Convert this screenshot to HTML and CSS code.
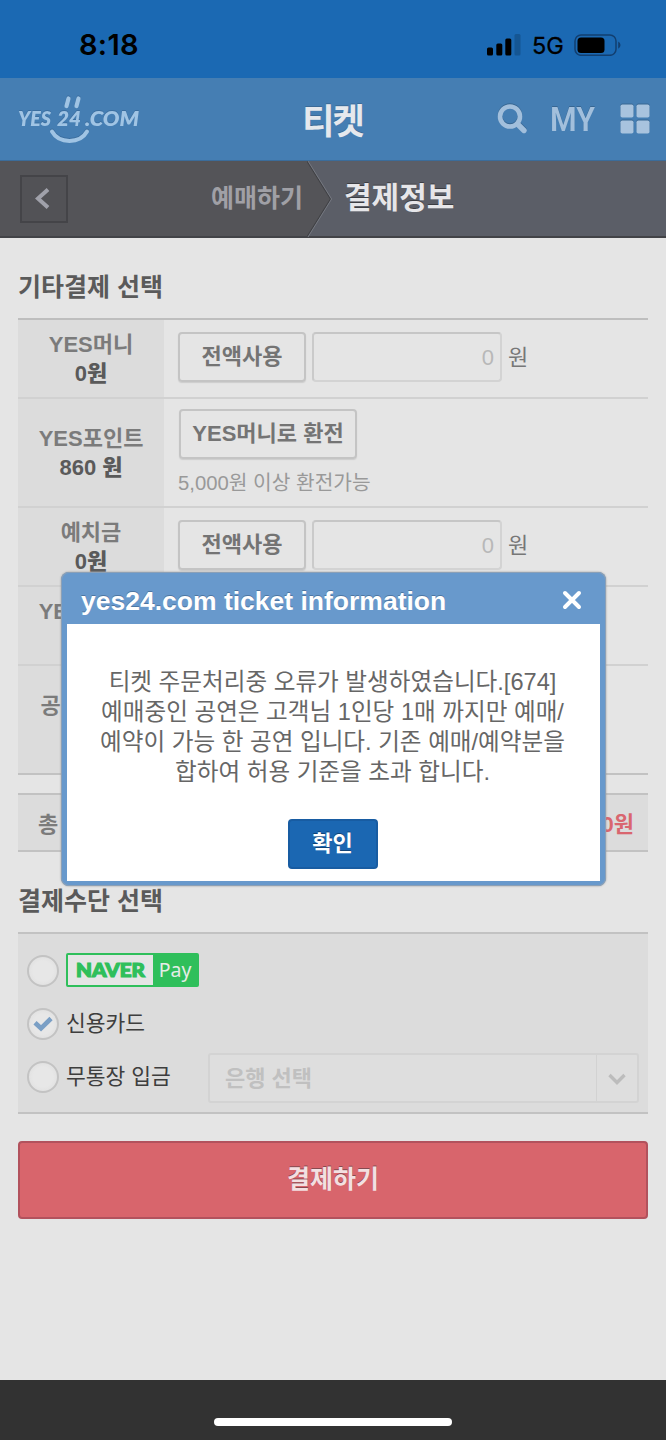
FILE: index.html
```html
<!DOCTYPE html>
<html lang="ko">
<head>
<meta charset="utf-8">
<title>결제정보</title>
<link rel="stylesheet" href="styles.css">
</head>
<body>
<div class="screen">
  <div class="status">
    <span class="time">8:18</span>
    <div class="status-icons">
      <svg class="signal" width="34" height="22" viewBox="0 0 34 22">
        <rect x="0" y="13.5" width="6" height="8" rx="1.5"/>
        <rect x="9.3" y="9.5" width="6" height="12" rx="1.5"/>
        <rect x="18.3" y="4.5" width="6" height="17" rx="1.5"/>
        <rect x="27.5" y="0" width="6" height="21.5" rx="1.5" fill="#155693"/>
      </svg>
      <span class="network">5G</span>
      <svg width="47" height="22" viewBox="0 0 47 22">
        <rect x="1" y=".9" width="41" height="20.4" rx="6" fill="none" stroke="#123f70" stroke-width="1.5"/>
        <rect x="3.5" y="3.4" width="27" height="15.6" rx="3.5"/>
        <path d="M44.2 7.5q2.3 1 2.3 3.6t-2.3 3.6z" fill="#123f70"/>
      </svg>
    </div>
  </div>

  <header class="nav">
    <svg class="logo" width="126" height="52" viewBox="0 0 126 52">
      <g class="logo-text">
        <text x="0" y="33" textLength="33" lengthAdjust="spacingAndGlyphs">YES</text>
        <text x="39" y="33" textLength="24" lengthAdjust="spacingAndGlyphs">24</text>
        <text x="67" y="33" textLength="54" lengthAdjust="spacingAndGlyphs">.COM</text>
      </g>
      <path d="M50.500 5.500l-2 7.500M60.500 5.500l-2 7.500" stroke-width="4.200"/>
      <path d="M34 38.500c7 12.500 28 12.500 35 0" stroke-width="4"/>
    </svg>
    <h1 class="nav-title">티켓</h1>
    <div class="nav-tools">
      <svg width="31" height="32" viewBox="0 0 31 32">
        <circle cx="13" cy="13.500" r="10" fill="none" stroke-width="4.6"/>
        <path d="M20.500 21l6.500 6.500" stroke-width="5.400"/>
      </svg>
      <svg class="my" width="46" height="32" viewBox="0 0 46 32"><text x="-1" y="27.500" textLength="45" lengthAdjust="spacingAndGlyphs">MY</text></svg>
      <svg class="grid" width="30" height="32" viewBox="0 0 30 32">
        <rect x=".5" y="1.500" width="13" height="13" rx="1.800"/><rect x="16.500" y="1.500" width="13" height="13" rx="1.800"/>
        <rect x=".5" y="17.500" width="13" height="13" rx="1.800"/><rect x="16.500" y="17.500" width="13" height="13" rx="1.800"/>
      </svg>
    </div>
  </header>

  <div class="steps">
    <div class="step-prev">
      <div class="back"><svg width="20" height="26" viewBox="0 0 20 26"><path d="M15 3.500L5 12.500l10 9" fill="none" stroke="#a0a1aa" stroke-width="4"/></svg></div>
      <span>예매하기</span>
    </div>
    <svg class="arrow" width="26" height="76" viewBox="0 0 26 76">
      <path d="M0 0L24 38 0 76z" fill="#545458"/>
      <path d="M0 0L23.500 38 0 76" fill="none" stroke="#414246" stroke-width="1.200"/>
      <path d="M1 0L24.600 38 1 76" fill="none" stroke="#767981" stroke-width="1"/>
    </svg>
    <span class="step-now">결제정보</span>
  </div>

  <main class="content">
    <h2 class="heading first">기타결제 선택</h2>
    <div class="table">
      <div class="row"><div class="label">YES머니<b>0원</b></div>
        <div class="cell"><span class="btn">전액사용</span><span class="field">0</span><span class="unit">원</span></div></div>
      <div class="row tall"><div class="label">YES포인트<b>860 원</b></div>
        <div class="cell stack"><span class="btn wide">YES머니로 환전</span><span class="hint">5,000원 이상 환전가능</span></div></div>
      <div class="row"><div class="label">예치금<b>0원</b></div>
        <div class="cell"><span class="btn">전액사용</span><span class="field">0</span><span class="unit">원</span></div></div>
      <div class="row"><div class="label">YES상품권<b>0원</b></div><div class="cell"></div></div>
      <div class="row tall last"><div class="label">공연예매권<b>0원</b></div><div class="cell"></div></div>
    </div>
    <div class="total"><span>총 결제금액</span><span class="amount">0원</span></div>

    <h2 class="heading second">결제수단 선택</h2>
    <div class="methods">
      <div class="method"><i class="radio"></i>
        <span class="naver"><svg width="85" height="30" viewBox="0 0 85 30"><text class="naver-word" x="8" y="21.500" textLength="69" lengthAdjust="spacingAndGlyphs">NAVER</text></svg><span class="pay">Pay</span></span></div>
      <div class="method"><i class="radio"><svg width="20" height="16" viewBox="0 0 20 16"><path d="M2 6.800L8 12.300 18 2.500" fill="none" stroke="#7a9fc5" stroke-width="4.600"/></svg></i><span class="method-name">신용카드</span></div>
      <div class="method"><i class="radio"></i><span class="method-name">무통장 입금</span>
        <div class="select"><span>은행 선택</span><span class="drop"><svg width="18" height="13" viewBox="0 0 18 13"><path d="M1.500 2L9 9.500 16.500 2" fill="none" stroke="#bcbcbc" stroke-width="3.400"/></svg></span></div></div>
    </div>
    <div class="submit">결제하기</div>
  </main>
  <footer class="home"><div class="home-bar"></div></footer>

  <section class="dialog">
    <div class="dialog-head"><span>yes24.com ticket information</span>
      <svg width="20" height="20" viewBox="0 0 20 20"><path d="M3 3l14 14M17 3L3 17" stroke="#fff" stroke-width="4" stroke-linecap="round"/></svg></div>
    <div class="dialog-body">
      <p>티켓 주문처리중 오류가 발생하였습니다.[674]<br>예매중인 공연은 고객님 1인당 1매 까지만 예매/<br>예약이 가능 한 공연 입니다. 기존 예매/예약분을<br>합하여 허용 기준을 초과 합니다.</p>
      <span class="ok">확인</span>
    </div>
  </section>
</div>
</body>
</html>
```
FILE: styles.css
```css
* { box-sizing: border-box; }
body { margin: 0; font-family: "Liberation Sans", "Noto Sans CJK KR", sans-serif; font-size: 22px; color: #7b7b7b; }
svg { display: block; flex: none; }
.screen { position: relative; width: 666px; height: 1440px; display: flex; flex-direction: column; background: #e5e5e5; overflow: hidden; white-space: nowrap; }

.status { height: 78px; background: #1b69b3; display: flex; justify-content: space-between; padding: 27px 45px 0 79px; color: #000; font-family: Inter, sans-serif; }
.time { font-size: 29px; font-weight: 600; line-height: 36px; letter-spacing: .3px; }
.status-icons { display: flex; padding-top: 7px; height: 36px; }
.network { font-size: 23.5px; font-weight: 400; line-height: 24px; margin: 0 11px; width: 31px; -webkit-text-stroke: .3px #000; }

.nav { height: 83px; background: #457eb3; border-bottom: 1px solid #3b6c9a; display: flex; align-items: center; justify-content: space-between; padding: 0 16px 0 18px; }
.logo { margin-top: 0; fill: none; stroke: #a0c4e4; stroke-linecap: round; filter: drop-shadow(0 -1px 0 #3b6e9f); }
.logo-text { font: italic 800 20.5px Lato, sans-serif; fill: #a0c4e4; stroke: none; }
.nav-title { margin: 0 0 0 24px; font: 700 35px/50px "Noto Sans CJK KR", sans-serif; letter-spacing: -2px; color: #e5e8ed; text-shadow: 0 -1px #3b6a97; }
.nav-tools { display: flex; gap: 23px; stroke: #a2bfdc; stroke-linecap: round; filter: drop-shadow(0 -1px 0 #376692); }
.my { font: 600 32.500px Roboto, sans-serif; fill: #a2bfdc; stroke: none; }
.grid { fill: #a8c3de; stroke: none; }

.steps { height: 77px; background: #5b5e67; border-bottom: 2px solid #424347; display: flex; }
.step-prev { width: 307px; background: #545458; display: flex; align-items: center; justify-content: space-between; padding: 0 4px 0 20px; color: #a0a0a6; font-size: 25px; font-weight: 700; }
.step-prev span { line-height: 40px; margin-top: -2px; }
.back { width: 48px; height: 48px; border: 2px solid #444448; background: #525256; display: grid; place-items: center; padding-right: 3px; margin-top: 1px; }
.step-now { font-size: 30px; font-weight: 700; color: #e6e6e9; line-height: 73px; margin-left: 11px; text-shadow: 0 -1px #3c3d42; }

.content { flex: 1; padding: 0 18px; }
.heading { margin: 0; font-size: 25px; line-height: 36px; font-weight: 700; color: #5a5a5a; }
.first { padding: 31px 0 13px; }
.table { border-top: 2px solid #bebebe; }
.row { display: flex; height: 79px; border-bottom: 2px solid #d1d1d1; }
.row.tall { height: 109px; }
.row.last { border-color: #c2c2c2; }
.label { width: 146px; background: #dcdcdc; display: flex; flex-direction: column; justify-content: center; align-items: center; line-height: 29px; font-weight: 700; }
.label b { color: #5a5a5a; }
.cell { display: flex; align-items: center; padding: 0 0 3px 14px; }
.cell.stack { flex-direction: column; align-items: flex-start; padding-top: 10px; }
.btn { width: 128px; height: 50px; border: 2px solid #c4c4c4; border-radius: 4px; box-shadow: 0 1px 1px #ccc; text-align: center; line-height: 46px; font-weight: 700; color: #747474; }
.wide { width: 178px; margin-left: 1px; }
.hint { font-size: 20.300px; line-height: 28px; color: #999; margin-top: 10px; }
.field { width: 190px; height: 50px; margin-left: 6px; border: 2px solid #d3d3d3; border-top-color: #c6c6c6; border-left-color: #cacaca; border-radius: 4px; text-align: right; line-height: 48px; color: #b8b8b8; padding-right: 6px; }
.unit { margin-left: 6px; line-height: 52px; color: #777; padding-top: 2px; }
.total { margin-top: 18px; height: 59px; background: #dcdcdc; border: solid #c2c2c2; border-width: 2px 0; display: flex; justify-content: space-between; align-items: center; padding: 0 14px 2px 20px; font-weight: 700; }
.amount { color: #d9666f; }
.second { padding: 31px 0 13px; }

.methods { height: 182px; background: #dcdcdc; border: solid #c2c2c2; border-width: 2px 0; padding: 10px 9px 0; }
.method { height: 53px; display: flex; align-items: center; font-size: 21.500px; color: #3e3e3e; }
.method-name { padding-bottom: 4px; }
.radio { width: 32px; height: 32px; margin-right: 7px; border: 2px solid #c3c3c3; border-radius: 50%; background: radial-gradient(#e7e7e7 50%, #dbdbdb); display: grid; place-items: center; }
.naver { display: flex; width: 133px; height: 34px; border: 2px solid #2fbf5b; border-radius: 2px; background: #e5e5e5; margin-top: -2px; }
.naver-word { font: 900 19px Lato, sans-serif; fill: #2fbf5b; stroke: #2fbf5b; stroke-width: 1.200px; }
.pay { flex: 1; background: #2fbf5b; color: #e5ece7; font: 19.500px/29px "Noto Sans", sans-serif; text-align: center; }
.select { margin-left: auto; width: 431px; height: 50px; background: #dedede; border: 2px solid #d3d3d3; border-radius: 3px; display: flex; justify-content: space-between; padding-left: 15px; line-height: 47px; font-size: 22px; font-weight: 700; color: #c0c0c0; margin-top: 3px; }
.drop { width: 41px; border-left: 1px solid #d2d2d2; display: grid; place-items: center; padding-top: 2px; }
.submit { margin-top: 27px; height: 78px; background: #d8656c; border: 2px solid #b2525d; border-radius: 4px; text-align: center; font-size: 25px; line-height: 73px; font-weight: 700; color: #f3dfe1; text-shadow: 0 -1px #864a50; }

.home { height: 60px; background: #323232; display: flex; justify-content: center; padding-top: 38px; }
.home-bar { width: 238px; height: 8px; border-radius: 4px; background: #fff; }

.dialog { position: absolute; left: 61px; top: 572px; width: 545px; height: 314px; background: #6899cc; border-radius: 8px; padding: 0 6px 5px; box-shadow: inset 0 0 0 1px #8ba0b7, 0 0 2px #909090; display: flex; flex-direction: column; }
.dialog-head { height: 52px; display: flex; align-items: center; justify-content: space-between; padding: 6px 18px 0 14px; color: #fff; font-weight: 700; font-size: 26.500px; text-shadow: 0 -1px #4d76a2; }
.dialog-head svg { margin-top: -3px; }
.dialog-body { flex: 1; background: #fff; display: flex; flex-direction: column; align-items: center; padding: 43px 2px 0 0; }
.dialog-body p { margin: 0; font-size: 23.600px; line-height: 30px; color: #666; text-align: center; }
.ok { margin-top: 32px; width: 90px; height: 50px; border: 2px solid #185ca2; border-radius: 4px; background: #1b67b2; color: #fff; font-weight: 700; line-height: 45px; text-align: center; text-shadow: 0 -1px #104378; }
```
